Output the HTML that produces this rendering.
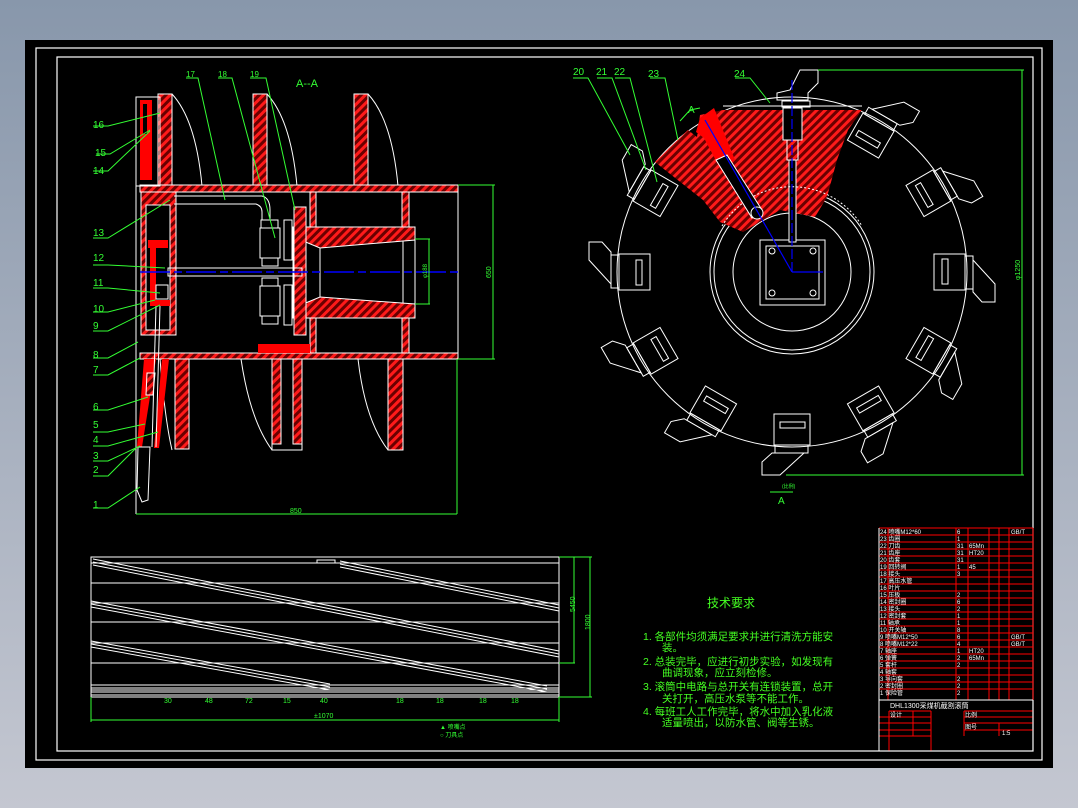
<!DOCTYPE html>
<html><head><meta charset="utf-8"><style>
html,body{margin:0;padding:0;width:1078px;height:808px;overflow:hidden;background:linear-gradient(#8897ab,#c4c7d1);}
svg{position:absolute;left:0;top:0}
text{font-family:"Liberation Sans","Noto Sans CJK SC",sans-serif;}
</style></head><body>
<svg width="1078" height="808" viewBox="0 0 1078 808">
<defs>
<pattern id="h" width="6" height="6" patternUnits="userSpaceOnUse" patternTransform="rotate(45)">
<rect width="6" height="6" fill="#6a0000"/><rect width="3" height="6" fill="#ff1a1a"/>
</pattern>
<g id="bl" fill="none" stroke="#fff" stroke-width="1">
<rect x="142" y="-18" width="31" height="36"/><rect x="173" y="-16" width="8" height="33"/>
<rect x="150" y="-13" width="6" height="25"/>
<polygon points="181,-12 203,12 203,30 190,30 181,20"/>
</g>
</defs>
<rect x="25" y="40" width="1028" height="728" fill="#000"/>
<rect x="36" y="48" width="1006" height="712" fill="none" stroke="#fff" stroke-width="1.2"/>
<rect x="57" y="57" width="976" height="694" fill="none" stroke="#fff" stroke-width="1.2"/>

<!-- LEFT SECTION VIEW -->
<g stroke="#fff" stroke-width="1" fill="none">
<!-- fins top -->
<rect x="158" y="94" width="14" height="92" fill="url(#h)"/>
<rect x="253" y="94" width="14" height="92" fill="url(#h)"/>
<rect x="354" y="94" width="14" height="92" fill="url(#h)"/>
<path d="M172 94 Q196 120 202 186"/><path d="M267 94 Q291 120 297 186"/><path d="M368 94 Q392 120 398 186"/>
<!-- bottom fins -->
<rect x="175" y="359" width="14" height="90" fill="url(#h)"/>
<rect x="272" y="359" width="30" height="91"/>
<rect x="272" y="359" width="9" height="85" fill="url(#h)"/><rect x="293" y="359" width="9" height="85" fill="url(#h)"/>
<rect x="388" y="359" width="15" height="91" fill="url(#h)"/>
<path d="M160 359 Q165 420 172 450"/><path d="M241 359 Q250 420 272 450"/><path d="M358 359 Q365 420 388 450"/>
<!-- drum walls -->
<rect x="140" y="185" width="318" height="7" fill="url(#h)"/>
<rect x="140" y="353" width="318" height="6" fill="url(#h)"/>
<line x1="458" y1="192" x2="458" y2="353"/>
<line x1="403" y1="192" x2="403" y2="353"/>
<rect x="310" y="192" width="6" height="36" fill="url(#h)"/><rect x="310" y="316" width="6" height="37" fill="url(#h)"/>
<rect x="402" y="192" width="7" height="36" fill="url(#h)"/><rect x="402" y="316" width="7" height="37" fill="url(#h)"/>
<!-- cone -->
<rect x="293" y="227" width="122" height="91"/>
<polygon points="296,227 415,227 415,240 320,248 296,238" fill="url(#h)"/>
<polygon points="296,307 320,297 415,304 415,318 296,318" fill="url(#h)"/>
<rect x="294" y="207" width="12" height="128" fill="url(#h)"/>
<line x1="320" y1="248" x2="320" y2="297"/>
<!-- left box -->
<rect x="141" y="192" width="35" height="143" fill="url(#h)"/>
<rect x="146" y="205" width="24" height="125" fill="#000"/>
<rect x="148" y="240" width="20" height="8" fill="#f00" stroke="none"/>
<rect x="150" y="246" width="6" height="60" fill="#f00" stroke="none"/>
<rect x="150" y="300" width="20" height="6" fill="#f00" stroke="none"/>
<rect x="156" y="285" width="12" height="14"/>
<!-- pipe 17 -->
<path d="M174 196 H262 Q270 198 270 210 V220"/><path d="M174 204 H256 Q262 206 262 212 V220"/>
<rect x="261" y="220" width="17" height="8"/><rect x="260" y="228" width="20" height="30"/><rect x="262" y="258" width="16" height="8"/>
<rect x="262" y="278" width="16" height="8"/><rect x="260" y="286" width="20" height="30"/><rect x="262" y="316" width="16" height="8"/>
<rect x="284" y="220" width="8" height="40"/><rect x="284" y="285" width="8" height="40"/>
<rect x="168" y="268" width="134" height="8"/>
<rect x="258" y="344" width="52" height="9" fill="#f00" stroke="none"/>
<!-- left tool -->
<rect x="136" y="97" width="24" height="89"/>
<rect x="140" y="100" width="12" height="80" fill="#f00" stroke="none"/>
<rect x="143" y="104" width="4" height="30" fill="#000" stroke="none"/>
<line x1="136" y1="186" x2="136" y2="514"/>
<polygon points="144,359 156,359 142,447 137,447" fill="#f00" stroke="none"/>
<polygon points="162,359 169,359 159,448 154,448" fill="#f00" stroke="none"/>
<polygon points="147,373 155,373 153,395 146,395" fill="url(#h)"/>
<polygon points="138,447 150,447 148,500 142,502 137,490"/>
<line x1="156" y1="306" x2="152" y2="447"/><line x1="160" y1="306" x2="156" y2="447"/>
</g>
<!-- blue centerline -->
<line x1="140" y1="272" x2="458" y2="272" stroke="#00f" stroke-width="1.5" stroke-dasharray="30,4,8,4"/>
<!-- dims -->
<g stroke="#3f3" stroke-width="1" fill="none">
<line x1="136" y1="514" x2="457" y2="514"/><line x1="457" y1="359" x2="457" y2="514"/>
<line x1="458" y1="185" x2="495" y2="185"/><line x1="458" y1="359" x2="495" y2="359"/><line x1="493" y1="185" x2="493" y2="359"/>
<line x1="415" y1="239" x2="430" y2="239"/><line x1="415" y1="304" x2="430" y2="304"/><line x1="429" y1="239" x2="429" y2="304"/>
<!-- leaders -->
<polyline points="93,126 108,126 160,113"/><polyline points="96,154 110,154 150,130"/><polyline points="93,171 108,171 150,131"/>
<polyline points="93,238 108,238 170,200"/><polyline points="93,265 108,265 165,268"/><polyline points="93,288 108,288 160,293"/>
<polyline points="93,312 108,312 155,300"/><polyline points="93,331 108,331 160,305"/><polyline points="93,358 108,358 138,342"/>
<polyline points="93,375 108,375 140,358"/><polyline points="93,410 108,410 148,397"/><polyline points="93,432 108,432 145,424"/>
<polyline points="93,446 108,446 158,432"/><polyline points="93,461 108,461 140,446"/><polyline points="93,476 108,476 136,448"/>
<polyline points="93,508 108,508 140,487"/>
<polyline points="186,78 198,78 225,200"/><polyline points="218,78 232,78 275,238"/><polyline points="250,78 266,78 295,210"/>
</g>
<g fill="#3f3" font-size="10">
<text x="93" y="128">16</text><text x="95" y="156">15</text><text x="93" y="174">14</text><text x="93" y="236">13</text>
<text x="93" y="261">12</text><text x="93" y="286">11</text><text x="93" y="312">10</text><text x="93" y="329">9</text>
<text x="93" y="358">8</text><text x="93" y="373">7</text><text x="93" y="410">6</text><text x="93" y="428">5</text>
<text x="93" y="443">4</text><text x="93" y="459">3</text><text x="93" y="473">2</text><text x="93" y="508">1</text>
<text x="186" y="77" font-size="8">17</text><text x="218" y="77" font-size="8">18</text><text x="250" y="77" font-size="8">19</text>
<text x="296" y="87" font-size="11">A--A</text>
<text x="290" y="513" font-size="7">850</text>
<text x="491" y="278" font-size="7" transform="rotate(-90 491 278)">650</text>
<text x="427" y="278" font-size="6" transform="rotate(-90 427 278)">φ188</text>
</g>

<!-- RIGHT VIEW -->
<g stroke="#fff" stroke-width="1" fill="none">
<circle cx="792" cy="272" r="175"/>
<circle cx="792" cy="272" r="82"/><circle cx="792" cy="272" r="78"/><circle cx="792" cy="272" r="59"/>
<rect x="760" y="240" width="65" height="65"/><rect x="766" y="246" width="53" height="53"/>
<circle cx="772" cy="251" r="3"/><circle cx="813" cy="251" r="3"/><circle cx="772" cy="293" r="3"/><circle cx="813" cy="293" r="3"/>
<g transform="translate(792 272)">
<use href="#bl"/><use href="#bl" transform="rotate(30)"/><use href="#bl" transform="rotate(60)"/><use href="#bl" transform="rotate(90)"/>
<use href="#bl" transform="rotate(120)"/><use href="#bl" transform="rotate(150)"/><use href="#bl" transform="rotate(180)"/>
<use href="#bl" transform="rotate(210)"/><use href="#bl" transform="rotate(300)"/><use href="#bl" transform="rotate(330)"/>
</g>
</g>
<polygon points="723,110 862,110 848,130 837,160 827,197 815,217 780,210 743,232 720,222 703,200 655,162 688,130 697,137 700,115" fill="url(#h)"/>
<g stroke="#fff" stroke-width="1" fill="none">
<path d="M723 106 H862"/><rect x="782" y="101" width="28" height="6"/>
<polygon points="800,70 818,70 818,83 808,93 808,100 777,100 777,93 790,90"/>
<rect x="783" y="108" width="19" height="32" fill="#000"/>
<rect x="787" y="140" width="11" height="20"/><rect x="789" y="160" width="7" height="82" fill="#000"/>
<path d="M722 226 A82 82 0 0 1 862 226" stroke-dasharray="2,2"/>
</g>
<polygon points="700,118 714,108 735,160 722,172 704,138 696,132" fill="#f00"/>
<polygon points="716,160 727,155 762,210 752,218" fill="#000" stroke="#fff"/>
<circle cx="757" cy="213" r="6" fill="#000" stroke="#fff"/>
<g stroke="#00f" stroke-width="1.2" fill="none">
<line x1="792" y1="80" x2="792" y2="272" stroke-dasharray="10,3"/><line x1="792" y1="272" x2="823" y2="272"/>
<line x1="705" y1="120" x2="792" y2="272"/>
</g>
<g stroke="#3f3" stroke-width="1" fill="none">
<line x1="818" y1="70" x2="1024" y2="70"/><line x1="786" y1="475" x2="1024" y2="475"/><line x1="1022" y1="70" x2="1022" y2="475"/>
<polyline points="573,78 588,78 630,155"/><polyline points="597,78 612,78 646,170"/><polyline points="615,78 630,78 657,182"/>
<polyline points="650,78 665,78 678,140"/><polyline points="735,78 750,78 770,103"/>
<polyline points="680,121 690,110 700,108"/>
<line x1="770" y1="492" x2="793" y2="492"/>
</g>
<g fill="#3f3" font-size="10">
<text x="573" y="75">20</text><text x="596" y="75">21</text><text x="614" y="75">22</text><text x="648" y="77">23</text><text x="734" y="77">24</text>
<text x="688" y="113">A</text><text x="778" y="504">A</text>
<text x="782" y="488" font-size="5">(比例)</text>
<text x="1020" y="280" font-size="7" transform="rotate(-90 1020 280)">φ1250</text>
</g>

<!-- BOTTOM DEVELOPMENT -->
<g stroke="#fff" stroke-width="1" fill="none">
<rect x="91" y="557" width="468" height="140"/>
<path d="M91 563H559M91 583H559M91 603H559M91 622H559M91 643H559M91 663H559M91 685H559M91 688H559M91 690H559M91 692H559M91 695H559"/>
<path d="M93 559L559 651M93 562L559 654M93 565L559 657"/>
<path d="M91 601L547 686M91 604L547 689M91 607L547 692"/>
<path d="M91 641L330 684M91 644L330 687M91 647L330 690"/>
<path d="M340 561L559 605M340 564L559 608M340 567L559 611"/>
<rect x="317" y="560" width="18" height="3"/>
</g>
<g stroke="#3f3" stroke-width="1" fill="none">
<path d="M91 697V722M559 697V722M91 720H559M559 557H592M559 663H575M559 697H592M574 557V663M590 557V697"/>
</g>
<g fill="#3f3" font-size="7">
<text x="314" y="718">±1070</text>
<text x="575" y="612" transform="rotate(-90 575 612)">5450</text>
<text x="590" y="630" transform="rotate(-90 590 630)">1800</text>
<text x="440" y="729" font-size="6">▲ 喷嘴点</text><text x="440" y="737" font-size="6">○ 刀具点</text>
<text x="164" y="703">30</text><text x="205" y="703">48</text><text x="245" y="703">72</text><text x="283" y="703">15</text><text x="320" y="703">40</text><text x="396" y="703">18</text><text x="436" y="703">18</text><text x="479" y="703">18</text><text x="511" y="703">18</text>
</g>

<!-- TECH REQUIREMENTS -->
<g fill="#4f2" font-size="10.5">
<text x="707" y="607" font-size="12">技术要求</text>
<text x="643" y="640">1. 各部件均须满足要求并进行清洗方能安</text>
<text x="662" y="651">装。</text>
<text x="643" y="665">2. 总装完毕，应进行初步实验，如发现有</text>
<text x="662" y="676">曲调现象，应立刻检修。</text>
<text x="643" y="690">3. 滚筒中电路与总开关有连锁装置，总开</text>
<text x="662" y="702">关打开，高压水泵等不能工作。</text>
<text x="643" y="715">4. 每班工人工作完毕，将水中加入乳化液</text>
<text x="662" y="726">适量喷出，以防水管、阀等生锈。</text>
</g>

<!-- TITLE BLOCK -->
<g stroke="#f00" stroke-width="1" fill="none">
<path d="M879 528H1033M879 535H1033M879 542H1033M879 549H1033M879 556H1033M879 563H1033M879 570H1033M879 577H1033M879 584H1033M879 591H1033M879 598H1033M879 605H1033M879 612H1033M879 619H1033M879 626H1033M879 633H1033M879 640H1033M879 647H1033M879 654H1033M879 661H1033M879 668H1033M879 675H1033M879 682H1033M879 689H1033"/>
<path d="M888 528V700M956 528V700M968 528V700M989 528V700M999 528V700M1009 528V700M1033 528V700"/>
<path d="M889 711H931M964 711H1033M879 717H931M964 717H1033M879 723H931M964 723H1033M879 730H931M964 730H1033M879 736H931"/>
<path d="M889 711V751M913 711V736M931 711V751M964 711V736M999 723V736"/>
</g>
<g stroke="#fff" stroke-width="1" fill="none">
<path d="M879 528V751M879 700H1033M879 751H1033M1033 700V751"/>
</g>
<g fill="#fff" font-size="6">
<text x="880" y="534">24 喷嘴M12*60</text><text x="957" y="534">6</text><text x="1011" y="534">GB/T</text>
<text x="880" y="541">23 齿圈</text><text x="957" y="541">1</text>
<text x="880" y="548">22 刀齿</text><text x="957" y="548">31</text><text x="969" y="548">65Mn</text>
<text x="880" y="555">21 齿座</text><text x="957" y="555">31</text><text x="969" y="555">HT20</text>
<text x="880" y="562">20 齿套</text><text x="957" y="562">31</text>
<text x="880" y="569">19 回转阀</text><text x="957" y="569">1</text><text x="969" y="569">45</text>
<text x="880" y="576">18 接头</text><text x="957" y="576">3</text>
<text x="880" y="583">17 高压水管</text>
<text x="880" y="590">16 叶片</text>
<text x="880" y="597">15 压板</text><text x="957" y="597">2</text>
<text x="880" y="604">14 密封圈</text><text x="957" y="604">6</text>
<text x="880" y="611">13 接头</text><text x="957" y="611">2</text>
<text x="880" y="618">12 密封套</text><text x="957" y="618">1</text>
<text x="880" y="625">11 轴承</text><text x="957" y="625">1</text>
<text x="880" y="632">10 开关轴</text><text x="957" y="632">8</text>
<text x="880" y="639">9 喷嘴M12*50</text><text x="957" y="639">6</text><text x="1011" y="639">GB/T</text>
<text x="880" y="646">8 喷嘴M12*22</text><text x="957" y="646">4</text><text x="1011" y="646">GB/T</text>
<text x="880" y="653">7 轴座</text><text x="957" y="653">1</text><text x="969" y="653">HT20</text>
<text x="880" y="660">6 弹簧</text><text x="957" y="660">2</text><text x="969" y="660">65Mn</text>
<text x="880" y="667">5 套杆</text><text x="957" y="667">2</text>
<text x="880" y="674">4 轴套</text>
<text x="880" y="681">3 导向套</text><text x="957" y="681">2</text>
<text x="880" y="688">2 密封圈</text><text x="957" y="688">2</text>
<text x="880" y="695">1 保险管</text><text x="957" y="695">2</text>
<text x="890" y="708" font-size="7">DHL1300采煤机截割滚筒</text>
<text x="890" y="717">设计</text><text x="965" y="717">比例</text><text x="965" y="729">图号</text><text x="1002" y="735">1:5</text>
</g>
</svg>
</body></html>
